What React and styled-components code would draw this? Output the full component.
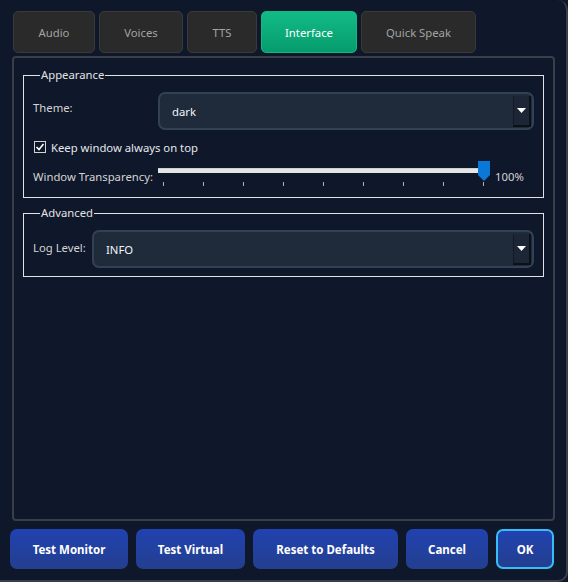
import React, { useState } from "react";
import styled, { createGlobalStyle } from "styled-components";

const GlobalStyle = createGlobalStyle`
  html, body {
    margin: 0;
    padding: 0;
    background: #0f172a;
  }
  body {
    font-family: "Noto Sans", "Open Sans", sans-serif;
    font-size: 11.3px;
    color: #e5e7eb;
  }
`;

const Window = styled.div`
  box-sizing: border-box;
  width: 568px;
  height: 582px;
  background: #0f172a;
  border-right: 2px solid #3a3f47;
  border-bottom: 2px solid #3a3f47;
  border-bottom-right-radius: 10px;
  border-top-right-radius: 10px;
  padding: 11px 11px 0 11px;
  display: flex;
  flex-direction: column;
`;

const TabBar = styled.div`
  display: flex;
  gap: 4px;
  padding-left: 2px;
  height: 42px;
`;

const Tab = styled.div`
  box-sizing: border-box;
  width: ${(p) => p.$w}px;
  height: 42px;
  display: flex;
  align-items: center;
  justify-content: center;
  border-radius: 5px;
  font-size: 11.3px;
  border: 1px solid ${(p) => (p.$active ? "#10b981" : "#3a3a3a")};
  background: ${(p) =>
    p.$active ? "linear-gradient(#12bb86, #069c6c)" : "#2a2a2a"};
  color: ${(p) => (p.$active ? "#ffffff" : "#a3a3a3")};
`;

const Panel = styled.div`
  box-sizing: border-box;
  margin-top: 3px;
  margin-left: 1px;
  width: 543px;
  height: 465px;
  border: 2px solid #3a3f47;
  border-radius: 4px;
  padding: 10px 9px 0 9px;
  display: flex;
  flex-direction: column;
  gap: 8px;
`;

const Group = styled.fieldset`
  box-sizing: border-box;
  margin: 0;
  border: 1px solid #e2e2e2;
  border-radius: 0;
  padding: ${(p) => p.$pad};
  display: flex;
  flex-direction: column;
  min-width: 0;
`;

const Legend = styled.legend`
  padding: 0 1px;
  margin-left: 7px;
  font-size: 11.3px;
  color: #e2e2e2;
  line-height: 14px;
`;

const Row = styled.div`
  display: flex;
  align-items: center;
  height: ${(p) => p.$h}px;
`;

const Label = styled.span`
  width: ${(p) => p.$w}px;
  flex-shrink: 0;
  white-space: nowrap;
  color: #d4d4d4;
  font-size: 11.3px;
  padding-bottom: ${(p) => p.$lift || 0}px;
`;

const Combo = styled.div`
  box-sizing: border-box;
  flex: 1;
  height: 38px;
  background: #1f2a3b;
  border: 2px solid #334155;
  border-radius: 7px;
  display: flex;
  align-items: center;
  padding-left: 12px;
  color: #f1f5f9;
  font-size: 11.3px;
  position: relative;
`;

const ComboArrow = styled.div`
  position: absolute;
  right: 1px;
  top: 2px;
  bottom: 1px;
  width: 15px;
  background: #1c2636;
  border-left: 1px solid #121a26;
  border-right: 2px solid #0b0f16;
  border-bottom: 2px solid #0b0f16;
  display: flex;
  align-items: center;
  justify-content: center;
`;

const CheckRow = styled.label`
  display: flex;
  align-items: center;
  gap: 5px;
  height: 24px;
  margin-top: 5px;
  color: #e5e7eb;
  font-size: 11.3px;
`;

const Box = styled.span`
  box-sizing: border-box;
  width: 12px;
  height: 12px;
  border: 1px solid #d4d4d4;
  background: #0f172a;
  display: flex;
  align-items: center;
  justify-content: center;
  margin-left: 1px;
`;

const SliderWrap = styled.div`
  position: relative;
  width: 327px;
  height: 28px;
`;

const Track = styled.div`
  position: absolute;
  left: 0;
  right: 4px;
  top: 6px;
  height: 4px;
  background: #e5e5e5;
  border-top: 1px solid #cfcfcf;
`;

const Handle = styled.svg`
  position: absolute;
  left: 320px;
  top: -1px;
`;

const Tick = styled.div`
  position: absolute;
  top: 20px;
  width: 1px;
  height: 4px;
  background: #b8b2a0;
`;

const Percent = styled.span`
  margin-left: 10px;
  color: #d4d4d4;
  font-size: 11.3px;
`;

const ButtonBar = styled.div`
  display: flex;
  gap: 8px;
  margin-top: 8px;
  margin-left: -1px;
`;

const Button = styled.button`
  box-sizing: border-box;
  width: ${(p) => p.$w}px;
  height: 40px;
  border-radius: 7px;
  border: ${(p) => (p.$focus ? "2px solid #38bdf8" : "none")};
  background: linear-gradient(#2142b0, #233f8f);
  color: #ffffff;
  font-family: "Noto Sans", "Open Sans", sans-serif;
  font-weight: 700;
  font-size: 11.5px;
  cursor: pointer;
`;

const tabs = [
  { name: "Audio", w: 82 },
  { name: "Voices", w: 84 },
  { name: "TTS", w: 70 },
  { name: "Interface", w: 96 },
  { name: "Quick Speak", w: 115 },
];

const Arrow = () => (
  <ComboArrow>
    <svg width="9" height="5" viewBox="0 0 9 5">
      <path d="M0 0 H9 L4.5 5 Z" fill="#ffffff" />
    </svg>
  </ComboArrow>
);

const ticks = [0, 1, 2, 3, 4, 5, 6, 7, 8];

export default function App() {
  const [active] = useState("Interface");
  return (
    <>
      <GlobalStyle />
      <Window>
        <TabBar>
          {tabs.map((t) => (
            <Tab key={t.name} $w={t.w} $active={t.name === active}>
              {t.name}
            </Tab>
          ))}
        </TabBar>
        <Panel>
          <Group $pad="10px 9px 4px 9px">
            <Legend>Appearance</Legend>
            <Row $h={38}>
              <Label $w={125} $lift={8}>Theme:</Label>
              <Combo>
                dark
                <Arrow />
              </Combo>
            </Row>
            <CheckRow>
              <Box>
                <svg width="10" height="10" viewBox="0 0 10 10">
                  <path d="M1.5 5 L4 7.5 L8.5 2" stroke="#ffffff" strokeWidth="1.6" fill="none" />
                </svg>
              </Box>
              Keep window always on top
            </CheckRow>
            <Row $h={34}>
              <Label $w={125}>Window Transparency:</Label>
              <SliderWrap>
                <Track />
                {ticks.map((i) => (
                  <Tick key={i} style={{ left: 5 + i * 40 }} />
                ))}
                <Handle width="12" height="20" viewBox="0 0 12 20">
                  <path d="M0 0 H12 V14 L6 20 L0 14 Z" fill="#0a78d7" />
                </Handle>
              </SliderWrap>
              <Percent>100%</Percent>
            </Row>
          </Group>
          <Group $pad="10px 9px 8px 9px">
            <Legend>Advanced</Legend>
            <Row $h={38}>
              <Label $w={59} $lift={4}>Log Level:</Label>
              <Combo>
                INFO
                <Arrow />
              </Combo>
            </Row>
          </Group>
        </Panel>
        <ButtonBar>
          <Button $w={118}>Test Monitor</Button>
          <Button $w={109}>Test Virtual</Button>
          <Button $w={145}>Reset to Defaults</Button>
          <Button $w={82}>Cancel</Button>
          <Button $w={58} $focus>OK</Button>
        </ButtonBar>
      </Window>
    </>
  );
}
